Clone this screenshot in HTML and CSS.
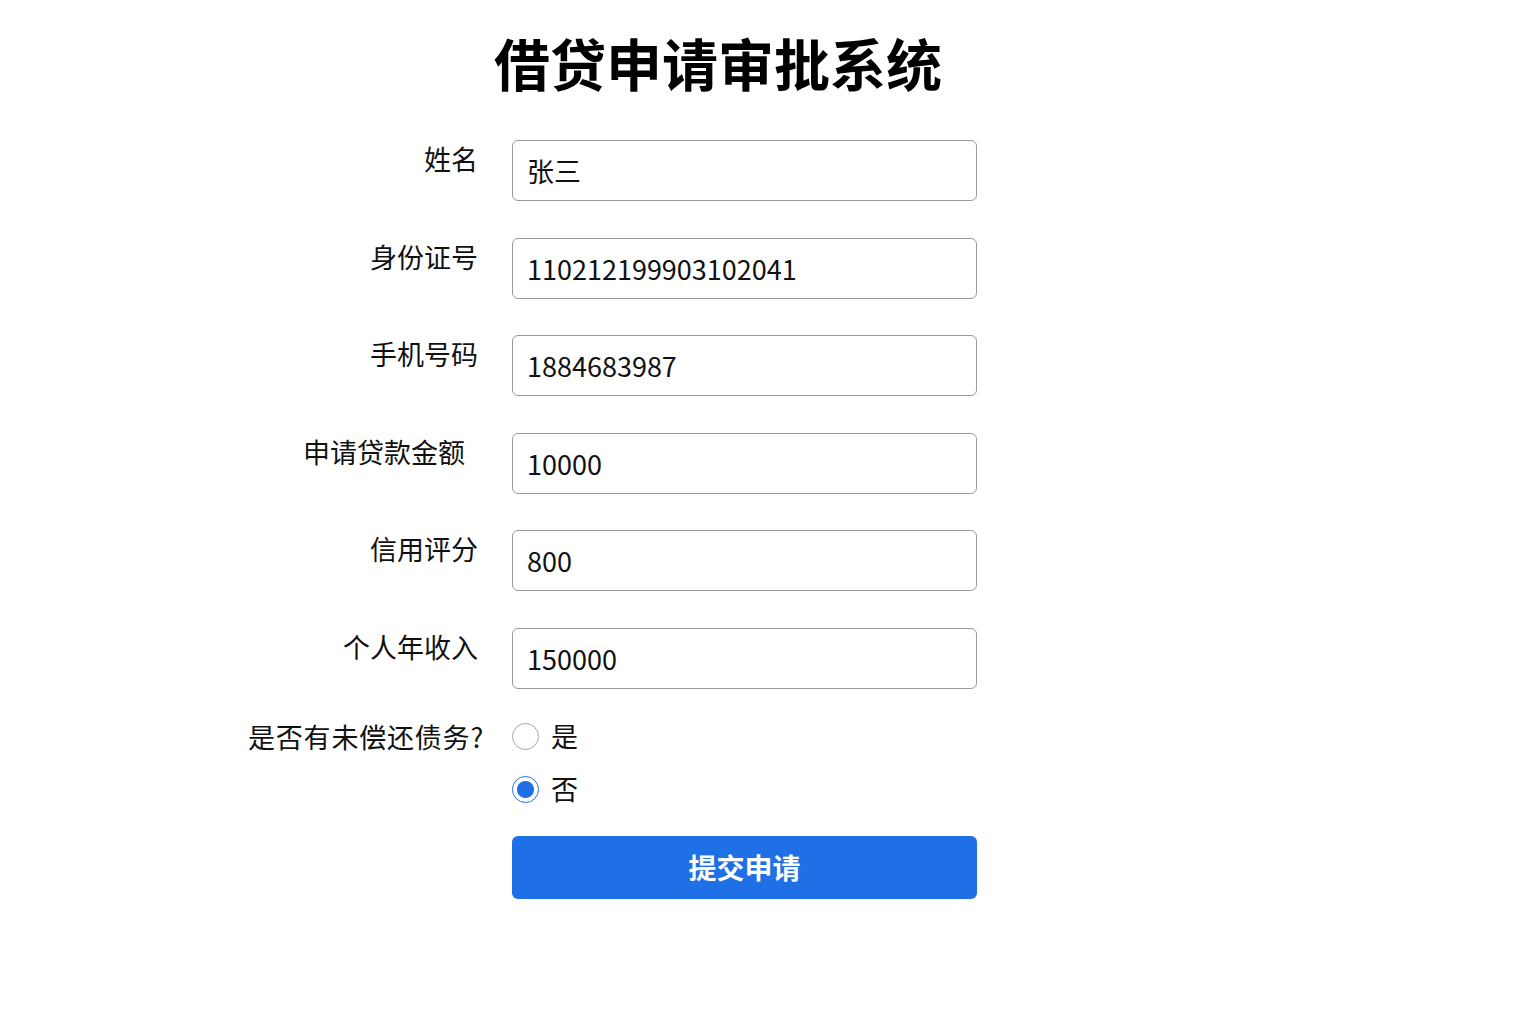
FILE: index.html
```html
<!DOCTYPE html>
<html lang="zh-CN">
<head>
    <meta charset="UTF-8">
    <meta name="viewport" content="width=device-width, initial-scale=1.0">
    <title>借贷申请审批系统</title>
    <link rel="stylesheet" href="styles.css">
</head>
<body>
    <div class="app">
        <h1>借贷申请审批系统</h1>

        <form id="loanForm" class="loan-form">
            <label class="field-label" for="name">姓名</label>
            <input class="field-input" type="text" id="name" value="张三">

            <label class="field-label" for="idNo">身份证号</label>
            <input class="field-input" type="text" id="idNo" value="110212199903102041">

            <label class="field-label" for="phone">手机号码</label>
            <input class="field-input" type="text" id="phone" value="1884683987">

            <label class="field-label short" for="amount">申请贷款金额</label>
            <input class="field-input" type="text" id="amount" value="10000">

            <label class="field-label" for="score">信用评分</label>
            <input class="field-input" type="text" id="score" value="800">

            <label class="field-label" for="income">个人年收入</label>
            <input class="field-input" type="text" id="income" value="150000">

            <span class="field-label radio-title">是否有未偿还债务?</span>
            <div class="radio-group">
                <label class="radio-item">
                    <input type="radio" name="debt" value="yes">
                    <span>是</span>
                </label>
                <label class="radio-item">
                    <input type="radio" name="debt" value="no" checked>
                    <span>否</span>
                </label>
            </div>

            <span></span>
            <button type="submit" class="submit-btn">提交申请</button>
        </form>
    </div>

    <script>
        document.getElementById('loanForm').addEventListener('submit', function(event) {
            event.preventDefault();
        });
    </script>
</body>
</html>
```

FILE: styles.css
```css
body {
    font-family: "Noto Sans CJK SC", "Noto Sans", sans-serif;
    background-color: #fff;
    color: #111;
    margin: 0;
    padding: 0;
}
.app {
    width: 960px;
    margin-left: 238px;
    padding-top: 30px;
}
h1 {
    margin: 0 0 46px;
    text-align: center;
    font-size: 56px;
    line-height: 64px;
    font-weight: 700;
    color: #000;
}
.loan-form {
    display: grid;
    grid-template-columns: 240px 465px;
    column-gap: 34px;
    row-gap: 36.5px;
    align-items: start;
}
.field-label {
    text-align: right;
    font-size: 27px;
    line-height: 38px;
    padding-top: 0;
    white-space: nowrap;
}
.field-label.short {
    padding-right: 13px;
}
.field-input {
    height: 61px;
    padding: 0 14px;
    border: 1px solid #9a9a9a;
    border-radius: 6px;
    box-sizing: border-box;
    font-family: inherit;
    font-size: 27px;
    color: #111;
    outline: none;
}
.radio-title {
    margin-top: -11px;
    margin-right: -6px;
    padding-top: 4px;
    letter-spacing: 0.8px;
}
.radio-group {
    display: flex;
    flex-direction: column;
    gap: 11px;
    margin-top: -10px;
}
.radio-item {
    display: flex;
    align-items: center;
    gap: 12px;
    font-size: 27px;
    line-height: 42px;
}
.radio-item input {
    appearance: none;
    width: 27px;
    height: 27px;
    margin: 0;
    border: 1px solid #a8a8a8;
    border-radius: 50%;
    background: #fff;
}
.radio-item input:checked {
    border-color: #1f6fe5;
    background: radial-gradient(circle, #1f6fe5 0 8px, #fff 9px);
}
.submit-btn {
    height: 63px;
    margin-top: -11px;
    background-color: #1f70e6;
    color: #fff;
    border: none;
    border-radius: 6px;
    font-family: inherit;
    font-size: 28px;
    font-weight: 700;
    cursor: pointer;
}
.submit-btn:hover {
    background-color: #1a60c6;
}
```
